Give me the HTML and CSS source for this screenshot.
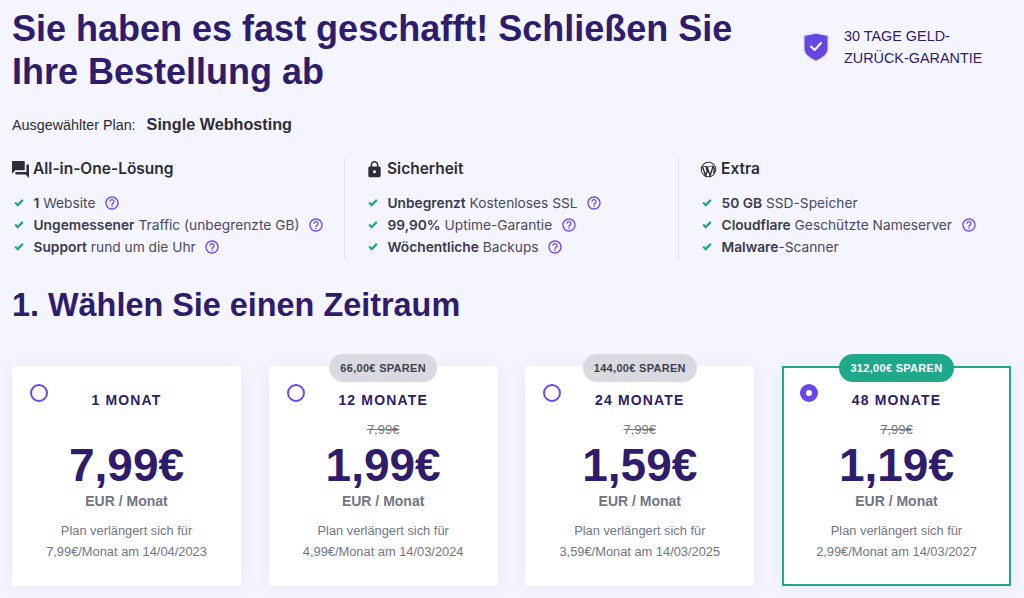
FILE: index.html
```html
<!DOCTYPE html>
<html lang="de">
<head>
    <meta charset="UTF-8">
    <meta name="viewport" content="width=device-width, initial-scale=1.0">
    <title>Bestellung abschließen</title>
    <link rel="stylesheet" href="styles.css">
</head>
<body>
    <svg class="icon-defs" aria-hidden="true">
        <symbol id="help" viewBox="0 0 24 24"><path d="M11 18h2v-2h-2v2zm1-16C6.48 2 2 6.48 2 12s4.48 10 10 10 10-4.48 10-10S17.52 2 12 2zm0 18c-4.41 0-8-3.59-8-8s3.59-8 8-8 8 3.59 8 8-3.59 8-8 8zm0-14c-2.21 0-4 1.79-4 4h2c0-1.1.9-2 2-2s2 .9 2 2c0 2-3 1.75-3 5h2c0-2.25 3-2.5 3-5 0-2.21-1.79-4-4-4z"/></symbol>
        <symbol id="check" viewBox="1 1 22 22"><path d="M9 20 1.800 12.800l3.400-3.400L9 13.200l9.800-9.800 3.400 3.400z"/></symbol>
    </svg>

    <header class="top">
        <h1>Sie haben es fast geschafft! Schließen Sie Ihre Bestellung ab</h1>
        <div class="guarantee">
            <svg class="shield" viewBox="0 0 28 32">
                <path d="M1 3.500 14 1l13 2.500V18c0 6-6.500 10.500-13 13C7.500 28.500 1 24 1 18z" fill="#e6e4fb"/>
                <path d="M2.500 5 14 2.800 25.500 5v13c0 5-5.500 9-11.500 11.400C8 27 2.500 23 2.500 18z" fill="#6747e0"/>
                <path d="m9 15.500 3.600 3.500 6.400-7" fill="none" stroke="#fff" stroke-width="2" stroke-linecap="round" stroke-linejoin="round"/>
            </svg>
            <p>30 TAGE GELD-<br>ZURÜCK-GARANTIE</p>
        </div>
    </header>

    <p class="selected-plan">Ausgewählter Plan: <strong>Single Webhosting</strong></p>

    <section class="features">
        <div class="feature-col">
            <h3>
                <svg class="head-icon" viewBox="2 2 20 20"><path d="M21 6h-2v9H6v2c0 .55.45 1 1 1h11l4 4V7c0-.55-.45-1-1-1zm-4 6V3c0-.55-.45-1-1-1H3c-.55 0-1 .45-1 1v14l4-4h10c.55 0 1-.45 1-1z"/></svg>
                All-in-One-Lösung
            </h3>
            <ul>
                <li><svg class="check"><use href="#check"/></svg><span><b>1</b> Website</span><svg class="help"><use href="#help"/></svg></li>
                <li><svg class="check"><use href="#check"/></svg><span><b>Ungemessener</b> Traffic (unbegrenzte GB)</span><svg class="help"><use href="#help"/></svg></li>
                <li><svg class="check"><use href="#check"/></svg><span><b>Support</b> rund um die Uhr</span><svg class="help"><use href="#help"/></svg></li>
            </ul>
        </div>
        <div class="feature-col">
            <h3>
                <svg class="head-icon" viewBox="1 1 22 22"><path d="M18 8h-1V6c0-2.760-2.240-5-5-5S7 3.240 7 6v2H6c-1.100 0-2 .9-2 2v10c0 1.100.9 2 2 2h12c1.100 0 2-.9 2-2V10c0-1.100-.9-2-2-2zm-6 9c-1.100 0-2-.9-2-2s.9-2 2-2 2 .9 2 2-.9 2-2 2zm3.100-9H8.900V6c0-1.710 1.390-3.100 3.100-3.100 1.710 0 3.100 1.390 3.100 3.100v2z"/></svg>
                Sicherheit
            </h3>
            <ul>
                <li><svg class="check"><use href="#check"/></svg><span><b>Unbegrenzt</b> Kostenloses SSL</span><svg class="help"><use href="#help"/></svg></li>
                <li><svg class="check"><use href="#check"/></svg><span><b>99,90%</b> Uptime-Garantie</span><svg class="help"><use href="#help"/></svg></li>
                <li><svg class="check"><use href="#check"/></svg><span><b>Wöchentliche</b> Backups</span><svg class="help"><use href="#help"/></svg></li>
            </ul>
        </div>
        <div class="feature-col">
            <h3>
                <svg class="head-icon" viewBox="0 0 24 24">
                    <circle cx="12" cy="12" r="11" fill="#2d2d33"/>
                    <circle cx="12" cy="12" r="9.600" fill="#fff"/>
                    <path d="M3.600 8.500 8 20.500l2.300-6.800-1.600-5M8 8.500h3.800M10 8.500l4.200 12 3.600-10.600c.5-1.500-.2-2.500-1.200-3 .9 0 2.500 1.200 3.300 3.300.7 2.500.3 5-1.300 7.300" fill="none" stroke="#2d2d33" stroke-width="2"/>
                    <path d="M3.800 7.800h5.400M12.500 7.800h3" stroke="#2d2d33" stroke-width="1.200"/>
                </svg>
                Extra
            </h3>
            <ul>
                <li><svg class="check"><use href="#check"/></svg><span><b>50 GB</b> SSD-Speicher</span></li>
                <li><svg class="check"><use href="#check"/></svg><span><b>Cloudflare</b> Geschützte Nameserver</span><svg class="help"><use href="#help"/></svg></li>
                <li><svg class="check"><use href="#check"/></svg><span><b>Malware</b>-Scanner</span></li>
            </ul>
        </div>
    </section>

    <h2 class="period-title">1. Wählen Sie einen Zeitraum</h2>

    <section class="plans">
        <div class="plan">
            <span class="radio"></span>
            <h4>1 MONAT</h4>
            <div class="old-price"></div>
            <div class="price">7,99€</div>
            <div class="unit">EUR / Monat</div>
            <p class="renew">Plan verlängert sich für<br>7,99€/Monat am 14/04/2023</p>
        </div>
        <div class="plan">
            <span class="badge">66,00€ SPAREN</span>
            <span class="radio"></span>
            <h4>12 MONATE</h4>
            <div class="old-price"><s>7,99€</s></div>
            <div class="price">1,99€</div>
            <div class="unit">EUR / Monat</div>
            <p class="renew">Plan verlängert sich für<br>4,99€/Monat am 14/03/2024</p>
        </div>
        <div class="plan">
            <span class="badge">144,00€ SPAREN</span>
            <span class="radio"></span>
            <h4>24 MONATE</h4>
            <div class="old-price"><s>7,99€</s></div>
            <div class="price">1,59€</div>
            <div class="unit">EUR / Monat</div>
            <p class="renew">Plan verlängert sich für<br>3,59€/Monat am 14/03/2025</p>
        </div>
        <div class="plan selected">
            <span class="badge">312,00€ SPAREN</span>
            <span class="radio"></span>
            <h4>48 MONATE</h4>
            <div class="old-price"><s>7,99€</s></div>
            <div class="price">1,19€</div>
            <div class="unit">EUR / Monat</div>
            <p class="renew">Plan verlängert sich für<br>2,99€/Monat am 14/03/2027</p>
        </div>
    </section>
</body>
</html>
```

FILE: styles.css
```css
/* global styles */
* {
    margin: 0;
    padding: 0;
    box-sizing: border-box;
}

body {
    background: #f4f5ff;
    font-family: 'Liberation Sans', Arial, sans-serif;
    color: #2f1c6a;
    height: 598px;
    overflow: hidden;
    padding: 7px 13px 0 12px;
}

.icon-defs {
    display: none;
}

/* header */
.top {
    display: flex;
    align-items: center;
}

h1 {
    width: 790px;
    padding-right: 40px;
    font-size: 36px;
    line-height: 43px;
    font-weight: 700;
}

.guarantee {
    display: flex;
    align-items: center;
    gap: 14px;
    margin-bottom: 6px;
    font-size: 14.4px;
    line-height: 22px;
}

.shield {
    width: 28px;
    height: 32px;
    flex: none;
}

.selected-plan {
    margin-top: 21px;
    font-size: 14.35px;
    line-height: 20px;
    color: #2d2d33;
}

.selected-plan strong {
    margin-left: 7px;
    font-size: 16.2px;
}

/* features */
.features {
    display: grid;
    grid-template-columns: 332px 334px 1fr;
    margin-top: 23px;
    height: 101px;
}

.feature-col {
    padding-left: 21px;
    border-left: 1px solid #e3e4ee;
}

.feature-col:first-child {
    padding-left: 0;
    border-left: none;
}

.feature-col h3 {
    display: flex;
    align-items: center;
    gap: 4px;
    font-family: Inter, sans-serif;
    font-size: 15.5px;
    font-weight: 600;
    line-height: 22px;
    color: #2d2d33;
}

.head-icon {
    width: 17px;
    height: 17px;
    flex: none;
    fill: #2d2d33;
}

.feature-col ul {
    list-style: none;
    margin-top: 12px;
}

.feature-col li {
    display: flex;
    align-items: center;
    height: 22px;
    font-family: Inter, sans-serif;
    font-size: 13.75px;
    color: #4a4a5c;
}

.feature-col li b {
    font-weight: 600;
    color: #3a3a4c;
}

.check {
    width: 10px;
    height: 10px;
    margin: 0 9.5px 0 2px;
    fill: #20a88b;
    flex: none;
}

.help {
    width: 16px;
    height: 16px;
    margin-left: 8.5px;
    fill: #6c47e8;
    flex: none;
}

.period-title {
    margin-top: 28px;
    font-size: 32.4px;
    line-height: 36px;
    font-weight: 700;
}

/* plan cards */
.plans {
    display: grid;
    grid-template-columns: repeat(4, 229px);
    justify-content: space-between;
    margin-top: 43px;
}

.plan {
    position: relative;
    height: 220px;
    padding-top: 25px;
    background: #fff;
    text-align: center;
    box-shadow: 0 2px 16px rgba(29, 30, 90, 0.06);
}

.plan.selected {
    border: 2px solid #20a88b;
    padding-top: 23px;
}

.radio {
    position: absolute;
    top: 18px;
    left: 18px;
    width: 18px;
    height: 18px;
    border: 2px solid #6c47e8;
    border-radius: 50%;
}

.plan.selected .radio {
    top: 16px;
    left: 16px;
    border-width: 6px;
}

.badge {
    position: absolute;
    top: -12px;
    left: 50%;
    transform: translateX(-50%);
    padding: 0 11px;
    height: 28px;
    line-height: 28px;
    border-radius: 14px;
    background: #d8dae0;
    color: #3f3f4f;
    font-size: 11px;
    font-weight: 700;
    letter-spacing: 0.3px;
    white-space: nowrap;
}

.plan.selected .badge {
    top: -14px;
    background: #20a88b;
    color: #fff;
}

.plan h4 {
    font-size: 14px;
    line-height: 18px;
    font-weight: 700;
    letter-spacing: 1.15px;
}

.old-price {
    height: 16px;
    margin-top: 13px;
    font-size: 13px;
    line-height: 16px;
    color: #727586;
}

.price {
    margin-top: 2px;
    font-size: 46px;
    line-height: 50px;
    font-weight: 700;
}

.unit {
    margin-top: 2px;
    font-size: 14px;
    line-height: 18px;
    font-weight: 700;
    color: #727586;
}

.renew {
    margin-top: 10px;
    font-size: 12.85px;
    line-height: 21px;
    color: #727586;
}
```
